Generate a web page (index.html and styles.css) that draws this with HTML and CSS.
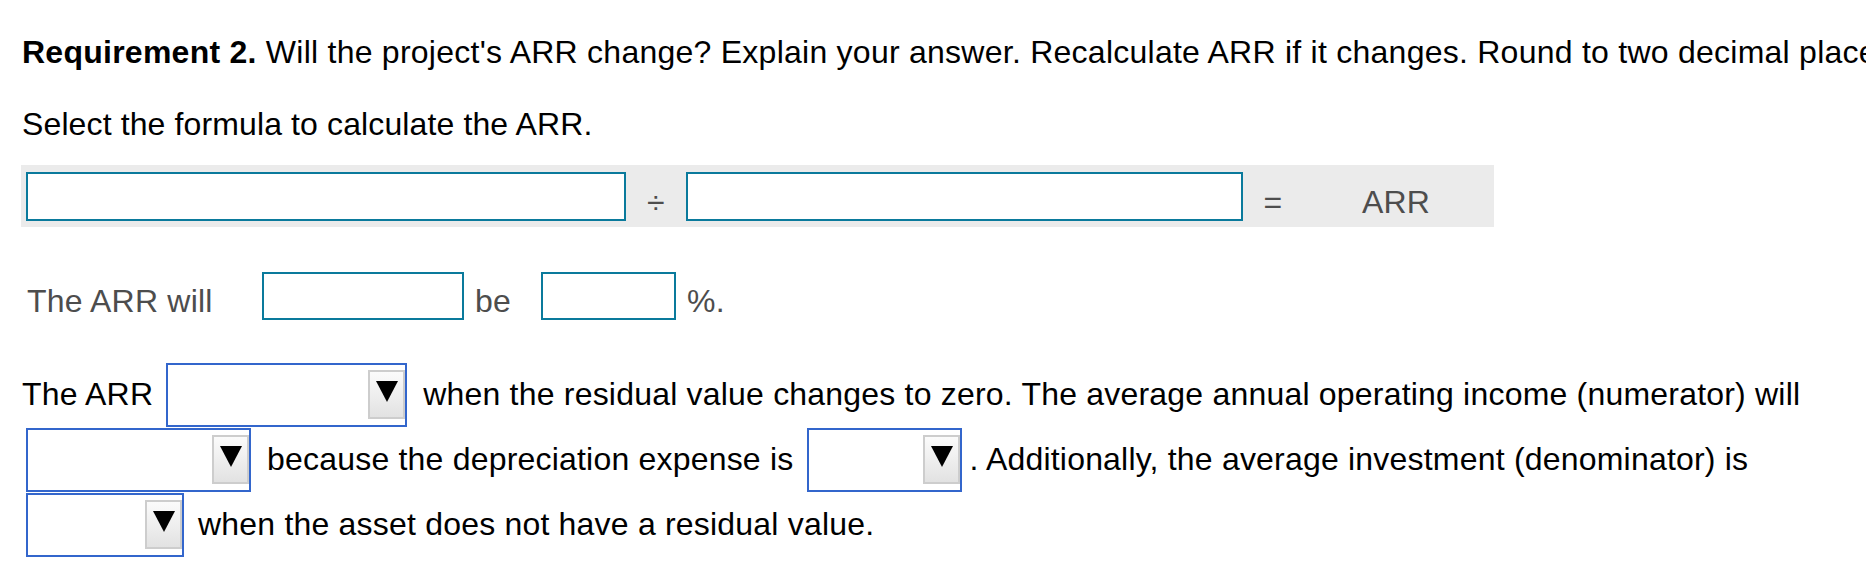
FILE: index.html
```html
<!DOCTYPE html>
<html lang="en">
<head>
<meta charset="utf-8">
<title>Requirement 2</title>
<link rel="stylesheet" href="styles.css">
</head>
<body>
<div class="page">
  <p class="req"><b>Requirement 2.</b> Will the project's ARR change? Explain your answer. Recalculate ARR if it changes. Round to two decimal places.</p>
  <p class="instr">Select the formula to calculate the ARR.</p>

  <div class="formula">
    <div class="box box-num"></div>
    <div class="op">&divide;</div>
    <div class="box box-den"></div>
    <div class="op">=</div>
    <div class="result">ARR</div>
  </div>

  <div class="arr-row">
    <span class="lbl">The ARR will</span>
    <div class="inp inp-a"></div>
    <span class="be">be</span>
    <div class="inp inp-b"></div>
    <span class="pct">%.</span>
  </div>

  <div class="expl">
    <div class="line">
      <span>The ARR</span>
      <div class="sel s1"><div class="btn"><svg width="22" height="21" viewBox="0 0 22 21"><polygon points="0,0 22,0 11,21" fill="#000"/></svg></div></div>
      <span class="t1">when the residual value changes to zero. The average annual operating income (numerator) will</span>
    </div>
    <div class="line">
      <div class="sel s2"><div class="btn"><svg width="22" height="21" viewBox="0 0 22 21"><polygon points="0,0 22,0 11,21" fill="#000"/></svg></div></div>
      <span class="t2">because the depreciation expense is</span>
      <div class="sel s4"><div class="btn"><svg width="22" height="21" viewBox="0 0 22 21"><polygon points="0,0 22,0 11,21" fill="#000"/></svg></div></div>
      <span class="t4">. Additionally, the average investment (denominator) is</span>
    </div>
    <div class="line">
      <div class="sel s3"><div class="btn"><svg width="22" height="21" viewBox="0 0 22 21"><polygon points="0,0 22,0 11,21" fill="#000"/></svg></div></div>
      <span class="t3">when the asset does not have a residual value.</span>
    </div>
  </div>
</div>
</body>
</html>
```
FILE: styles.css
```css
html, body {
  margin: 0;
  padding: 0;
  overflow: hidden;
  background: #fff;
}
body {
  font-family: "Liberation Sans", Arial, sans-serif;
  font-size: 32px;
  letter-spacing: 0.2px;
  color: #000;
}
.page {
  padding: 34px 0 0 22px;
}
.req {
  margin: 0;
  white-space: nowrap;
  letter-spacing: 0.25px;
}
.instr {
  margin: 35px 0 0;
  white-space: nowrap;
  letter-spacing: 0.12px;
}
.formula {
  display: flex;
  align-items: flex-end;
  margin: 22px 0 0 -1px;
  width: 1473px;
  height: 62px;
  box-sizing: border-box;
  padding: 7px 5px 6px 5px;
  background: #ebebeb;
}
.box {
  height: 49px;
  box-sizing: border-box;
  border: 2px solid #0a7a9c;
  background: #fff;
  flex: none;
}
.box-num { width: 600px; }
.box-den { width: 557px; }
.op {
  width: 60px;
  flex: none;
  text-align: center;
  color: #4d4d4d;
}
.result {
  flex: 1;
  text-align: center;
  color: #4d4d4d;
}
.arr-row {
  display: flex;
  align-items: flex-end;
  margin-top: 45px;
  color: #4d4d4d;
  white-space: nowrap;
}
.lbl {
  margin-left: 5px;
  width: 235px;
  flex: none;
}
.inp {
  height: 48px;
  box-sizing: border-box;
  border: 2px solid #0a7a9c;
  background: #fff;
  flex: none;
}
.inp-a { width: 202px; }
.inp-b { width: 135px; }
.be {
  margin-left: 11px;
  width: 66px;
  flex: none;
}
.pct { margin-left: 11px; }
.expl {
  margin-top: 42px;
}
.line {
  display: flex;
  align-items: center;
  height: 65px;
  white-space: nowrap;
}
.sel {
  height: 64px;
  box-sizing: border-box;
  border: 2px solid #3366cc;
  background: #fff;
  display: flex;
  align-items: center;
  justify-content: flex-end;
  flex: none;
}
.btn {
  width: 37px;
  height: 49px;
  box-sizing: border-box;
  border: 2px solid #cdcdcd;
  background: linear-gradient(#fbfbfb, #e2e2e2);
  display: flex;
  align-items: center;
  justify-content: center;
  padding-bottom: 6px;
}
.btn svg { display: block; }
.s1 { width: 241px; margin-left: 13px; }
.s2 { width: 225px; margin-left: 4px; }
.s3 { width: 158px; margin-left: 4px; }
.s4 { width: 155px; margin-left: 14px; }
.t1 { margin-left: 16px; }
.t2 { margin-left: 16px; }
.t3 { margin-left: 14px; }
.t4 { margin-left: 7px; }
```
